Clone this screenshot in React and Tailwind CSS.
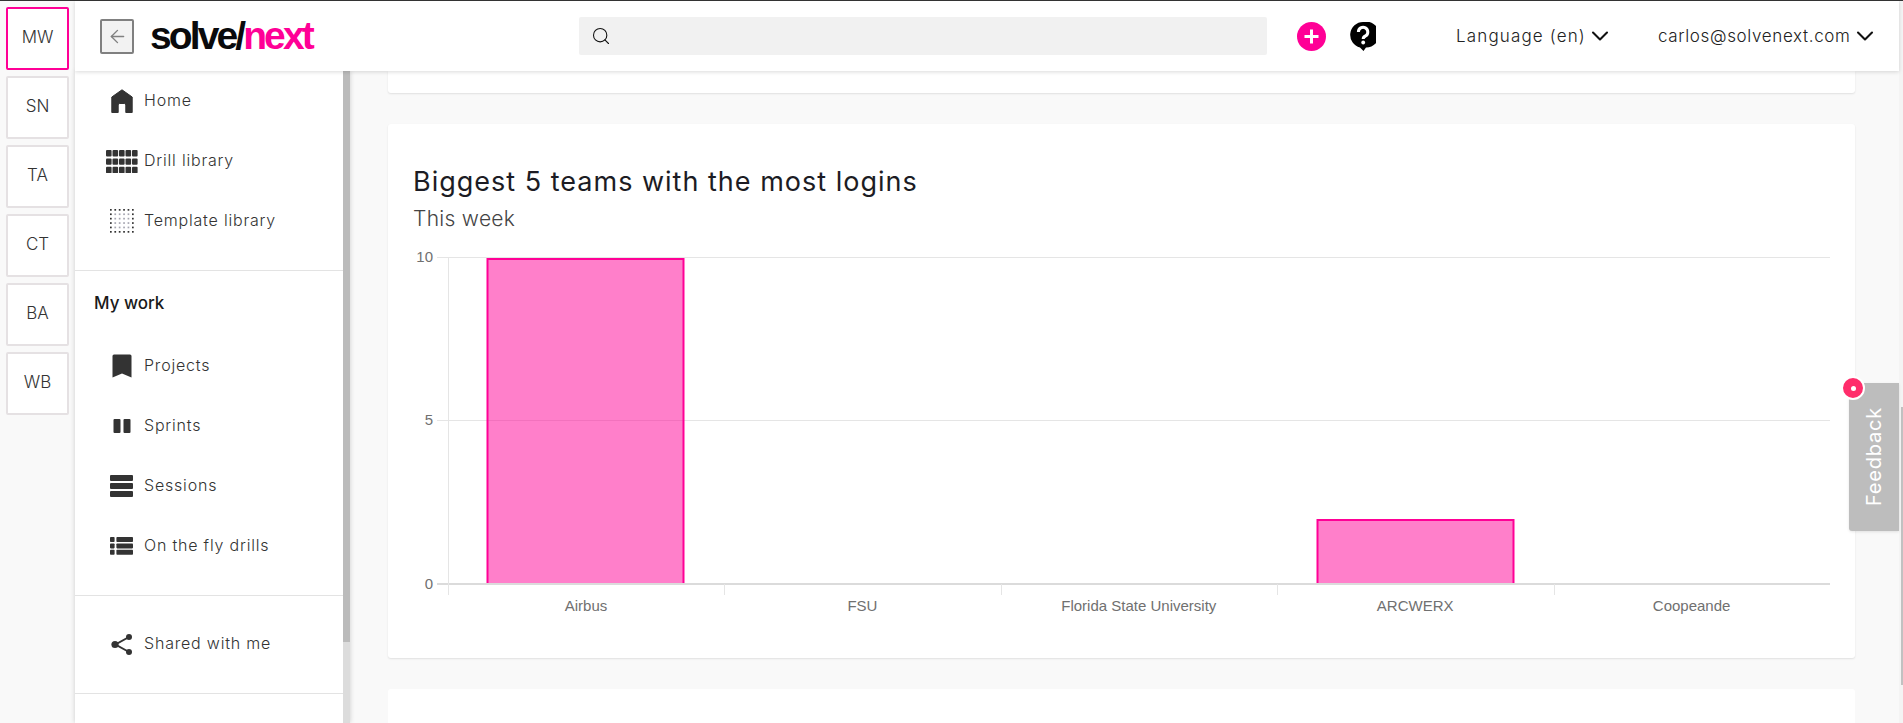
import React from "react";
import { ArrowLeft, ChevronDown, Search } from "lucide-react";

const ui = "font-['Inter','Open_Sans',sans-serif]";

const HomeIcon = () => (
  <svg width="22" height="24" viewBox="0 0 22 24"><path d="M11 .8 L21.2 8 V23.5 H14.8 V16 Q14.8 14.5 13.3 14.5 H8.7 Q7.2 14.5 7.2 16 V23.5 H.8 V8 Z" fill="#333" stroke="#333" strokeLinejoin="round" /></svg>
);
const DrillIcon = () => {
  const cells = [];
  for (let r = 0; r < 3; r++) for (let c = 0; c < 5; c++) cells.push(<rect key={`${r}-${c}`} x={c * 6.5} y={r * 8.4} width="5.6" height="6.4" rx="1" fill="#333" />);
  return <svg width="32" height="23" viewBox="0 0 32 23">{cells}</svg>;
};
const TemplateIcon = () => {
  const cells = [];
  for (let r = 0; r < 6; r++) for (let c = 0; c < 6; c++) {
    const edge = r === 0 || r === 5 || c === 0 || c === 5;
    cells.push(<rect key={`${r}-${c}`} x={c * 4.4} y={r * 4.4} width="1.7" height="1.7" fill={edge ? "#333" : "#a5a5b0"} />);
  }
  return <svg width="24" height="24" viewBox="0 0 24 24">{cells}</svg>;
};
const BookmarkIcon = () => (
  <svg width="20" height="24" viewBox="0 0 20 24"><path d="M2 0.5 H18 Q19.5 .5 19.5 2 V23.5 L10 19.5 L.5 23.5 V2 Q.5 .5 2 .5 Z" fill="#333" /></svg>
);
const SprintIcon = () => (
  <svg width="18" height="14" viewBox="0 0 18 14"><rect x="0.5" width="7" height="14" rx="1" fill="#333" /><rect x="10.5" width="7" height="14" rx="1" fill="#333" /></svg>
);
const SessionIcon = () => (
  <svg width="24" height="22" viewBox="0 0 24 22"><rect width="23" height="6" rx="1" fill="#333" /><rect y="8" width="23" height="6" rx="1" fill="#333" /><rect y="16" width="23" height="6" rx="1" fill="#333" /></svg>
);
const ListIcon = () => (
  <svg width="24" height="18" viewBox="0 0 24 18">
    {[0, 6.4, 12.8].map((y) => (
      <g key={y}><rect y={y} width="4.6" height="5" rx=".8" fill="#333" /><rect x="6.4" y={y} width="16.6" height="5" rx=".8" fill="#333" /></g>
    ))}
  </svg>
);
const ShareIcon = () => (
  <svg width="22" height="23" viewBox="0 0 22 23"><path d="M18 4 L4.5 11.5 L18 19" fill="none" stroke="#333" strokeWidth="2" /><circle cx="18" cy="4" r="3" fill="#333" /><circle cx="4" cy="11.5" r="3.6" fill="#333" /><circle cx="18" cy="19" r="3" fill="#333" /></svg>
);
const PlusIcon = () => (
  <svg width="29" height="29" viewBox="0 0 29 29"><circle cx="14.5" cy="14.5" r="14.5" fill="#ff0096" /><path d="M14.5 7.5 V21.5 M7.5 14.5 H21.5" stroke="#fff" strokeWidth="3" /></svg>
);
const HelpIcon = () => (
  <svg width="26" height="29" viewBox="0 0 26 29">
    <path d="M13 0 A13 13 0 1 1 16 25.6 L13.5 29 L10 25.6 A13 13 0 0 1 13 0 Z" fill="#000" />
    <path d="M8.4 10 A4.7 4.7 0 1 1 15.5 14 Q13.2 15 13.2 17" fill="none" stroke="#fff" strokeWidth="3" />
    <circle cx="13.2" cy="20.5" r="1.9" fill="#fff" />
  </svg>
);

const Team = ({ label, active }) => (
  <div className={`w-[63px] h-[63px] bg-white rounded-[2px] border-2 flex items-center justify-center pb-[2px] text-[17px] font-light text-[#333] ${active ? "border-[#ff0096]" : "border-[#e5e1e3]"}`}>{label}</div>
);

const NavRow = ({ icon, label }) => (
  <div className="h-[60px] flex items-center text-[16px] font-light text-[#333] tracking-[0.8px]">
    <span className="w-[69px] pl-[24px] flex justify-center items-center shrink-0">{icon}</span>
    <span className="pb-[2px]">{label}</span>
  </div>
);

const names = ["Airbus", "FSU", "Florida State University", "ARCWERX", "Coopeande"];
const pitch = 276.4;

const Chart = () => (
  <svg width="1417" height="375" viewBox="0 0 1417 375" className="block font-['Liberation_Sans',Arial,sans-serif]">
    <path d="M24 12.5 H1417 M24 175.5 H1417" stroke="#e5e5e5" />
    <path d="M24 339 H1417" stroke="#cfcfcf" strokeWidth="1.5" />
    <path d="M35.5 12 V350 " stroke="#e5e5e5" />
    {[1, 2, 3, 4].map((i) => (
      <path key={i} d={`M${Math.round(35 + pitch * i) + 0.5} 339 V350`} stroke="#e5e5e5" />
    ))}
    <rect x="74" y="13" width="197" height="325" fill="#ff0096" fillOpacity=".5" />
    <path d="M74.5 338 V14 H270.5 V338" fill="none" stroke="#ff0096" strokeWidth="2" />
    <rect x="904" y="275" width="197" height="63" fill="#ff0096" fillOpacity=".5" />
    <path d="M904.5 338 V275 H1100.5 V338" fill="none" stroke="#ff0096" strokeWidth="2" />
    <g fill="#707070" fontSize="15" textAnchor="end">
      <text x="20" y="17">10</text>
      <text x="20" y="180">5</text>
      <text x="20" y="344">0</text>
    </g>
    <g fill="#707070" fontSize="15" textAnchor="middle">
      {names.map((n, i) => (
        <text key={n} x={173 + pitch * i} y="366">{n}</text>
      ))}
    </g>
  </svg>
);

export default function App() {
  return (
    <div className={`relative w-full h-[723px] overflow-hidden flex border-t border-[#333] bg-[#f9f9f9] ${ui}`}>
      <aside className="w-[75px] shrink-0 flex flex-col items-center gap-[6px] pt-[6px]">
        <Team label="MW" active />
        <Team label="SN" />
        <Team label="TA" />
        <Team label="CT" />
        <Team label="BA" />
        <Team label="WB" />
      </aside>

      <div className="flex-1 min-w-0 flex flex-col">
        <header className="relative z-10 h-[70px] shrink-0 bg-white shadow-[0_1px_4px_rgba(0,0,0,0.15)] flex items-center">
          <button className="ml-[25px] w-[34px] h-[35px] border-2 border-[#808080] rounded-[2px] bg-[#f2f2f2] flex items-center justify-center">
            <ArrowLeft size={21} strokeWidth={1.6} color="#808080" />
          </button>
          <div className="ml-[16px] w-[429px] font-['Liberation_Sans',Arial,sans-serif] font-bold text-[39px] leading-none tracking-[-2.9px] text-[#0a0a0c] pb-[2px]">
            solve/<span className="text-[#ff0096]">next</span>
          </div>
          <div className="w-[688px] h-[38px] bg-[#f1f1f1] rounded-[2px] flex items-center pl-[12px]">
            <Search size={20} strokeWidth={1.3} color="#111" />
          </div>
          <div className="ml-[30px]"><PlusIcon /></div>
          <div className="ml-[24px]"><HelpIcon /></div>
          <div className="ml-[80px] w-[159px] shrink-0 flex items-center whitespace-nowrap text-[17px] font-light text-[#222] tracking-[1.15px]">
            <span className="pt-[1px]">Language (en)</span>
            <ChevronDown size={28} strokeWidth={1.8} color="#111" className="shrink-0" />
          </div>
          <div className="ml-[43px] flex items-center whitespace-nowrap text-[17px] font-light text-[#222] tracking-[0.65px]">
            <span className="pt-[1px]">carlos@solvenext.com</span>
            <ChevronDown size={28} strokeWidth={1.8} color="#111" className="shrink-0" />
          </div>
        </header>

        <div className="flex-1 min-h-0 flex">
          <nav className="w-[275px] shrink-0 flex bg-white shadow-[0_0_5px_rgba(0,0,0,0.18)]">
            <div className="flex-1 min-w-0">
              <div className="pb-[19px] border-b border-[#e3e3e3]">
                <NavRow icon={<HomeIcon />} label="Home" />
                <NavRow icon={<DrillIcon />} label="Drill library" />
                <NavRow icon={<TemplateIcon />} label="Template library" />
              </div>
              <div className="pb-[19px] border-b border-[#e3e3e3]">
                <div className="h-[65px] pl-[19px] flex items-center text-[17px] font-medium text-[#1a1a1a]">My work</div>
                <NavRow icon={<BookmarkIcon />} label="Projects" />
                <NavRow icon={<SprintIcon />} label="Sprints" />
                <NavRow icon={<SessionIcon />} label="Sessions" />
                <NavRow icon={<ListIcon />} label="On the fly drills" />
              </div>
              <div className="pt-[18px] pb-[19px] border-b border-[#e3e3e3]">
                <NavRow icon={<ShareIcon />} label="Shared with me" />
              </div>
            </div>
            <div className="w-[7px] shrink-0 bg-[#dcdcdc]">
              <div className="h-[571px] bg-[#bbbbbb]" />
            </div>
          </nav>

          <main className="flex-1 min-w-0 pl-[38px] pr-[44px] flex flex-col gap-[31px]">
            <div className="h-[22px] shrink-0 bg-white rounded-b-[3px] shadow-[0_1px_2px_rgba(0,0,0,0.1)]" />
            <section className="h-[534px] shrink-0 bg-white rounded-[3px] shadow-[0_1px_2px_rgba(0,0,0,0.1)] pl-[25px]">
              <h2 className="pt-[39px] text-[27px] leading-[38px] text-[#1c1c24] tracking-[1px]">Biggest 5 teams with the most logins</h2>
              <p className="text-[21px] leading-[36px] font-light text-[#444] tracking-[0.3px]">This week</p>
              <div className="mt-[8px]"><Chart /></div>
            </section>
            <div className="h-[60px] shrink-0 bg-white rounded-t-[3px]" />
          </main>
        </div>
      </div>

      <div className="w-[4px] shrink-0 bg-[#f4f4f4] relative">
        <div className="absolute right-0 top-[406px] w-[2px] h-[278px] bg-[#c1c1c1]" />
      </div>

      <div className="absolute right-[4px] top-[382px] w-[50px] h-[148px] bg-[#bdbdbd] rounded-l-[3px] shadow-[0_1px_3px_rgba(0,0,0,0.1)] flex items-center justify-center">
        <span className="[writing-mode:vertical-rl] rotate-180 text-white text-[20px] tracking-[0.8px]">Feedback</span>
      </div>
      <div className="absolute left-[1841px] top-[375px] w-[24px] h-[24px] rounded-full bg-[#ff2d6b] border-2 border-white flex items-center justify-center">
        <div className="w-[5px] h-[5px] rounded-full bg-white" />
      </div>
    </div>
  );
}
